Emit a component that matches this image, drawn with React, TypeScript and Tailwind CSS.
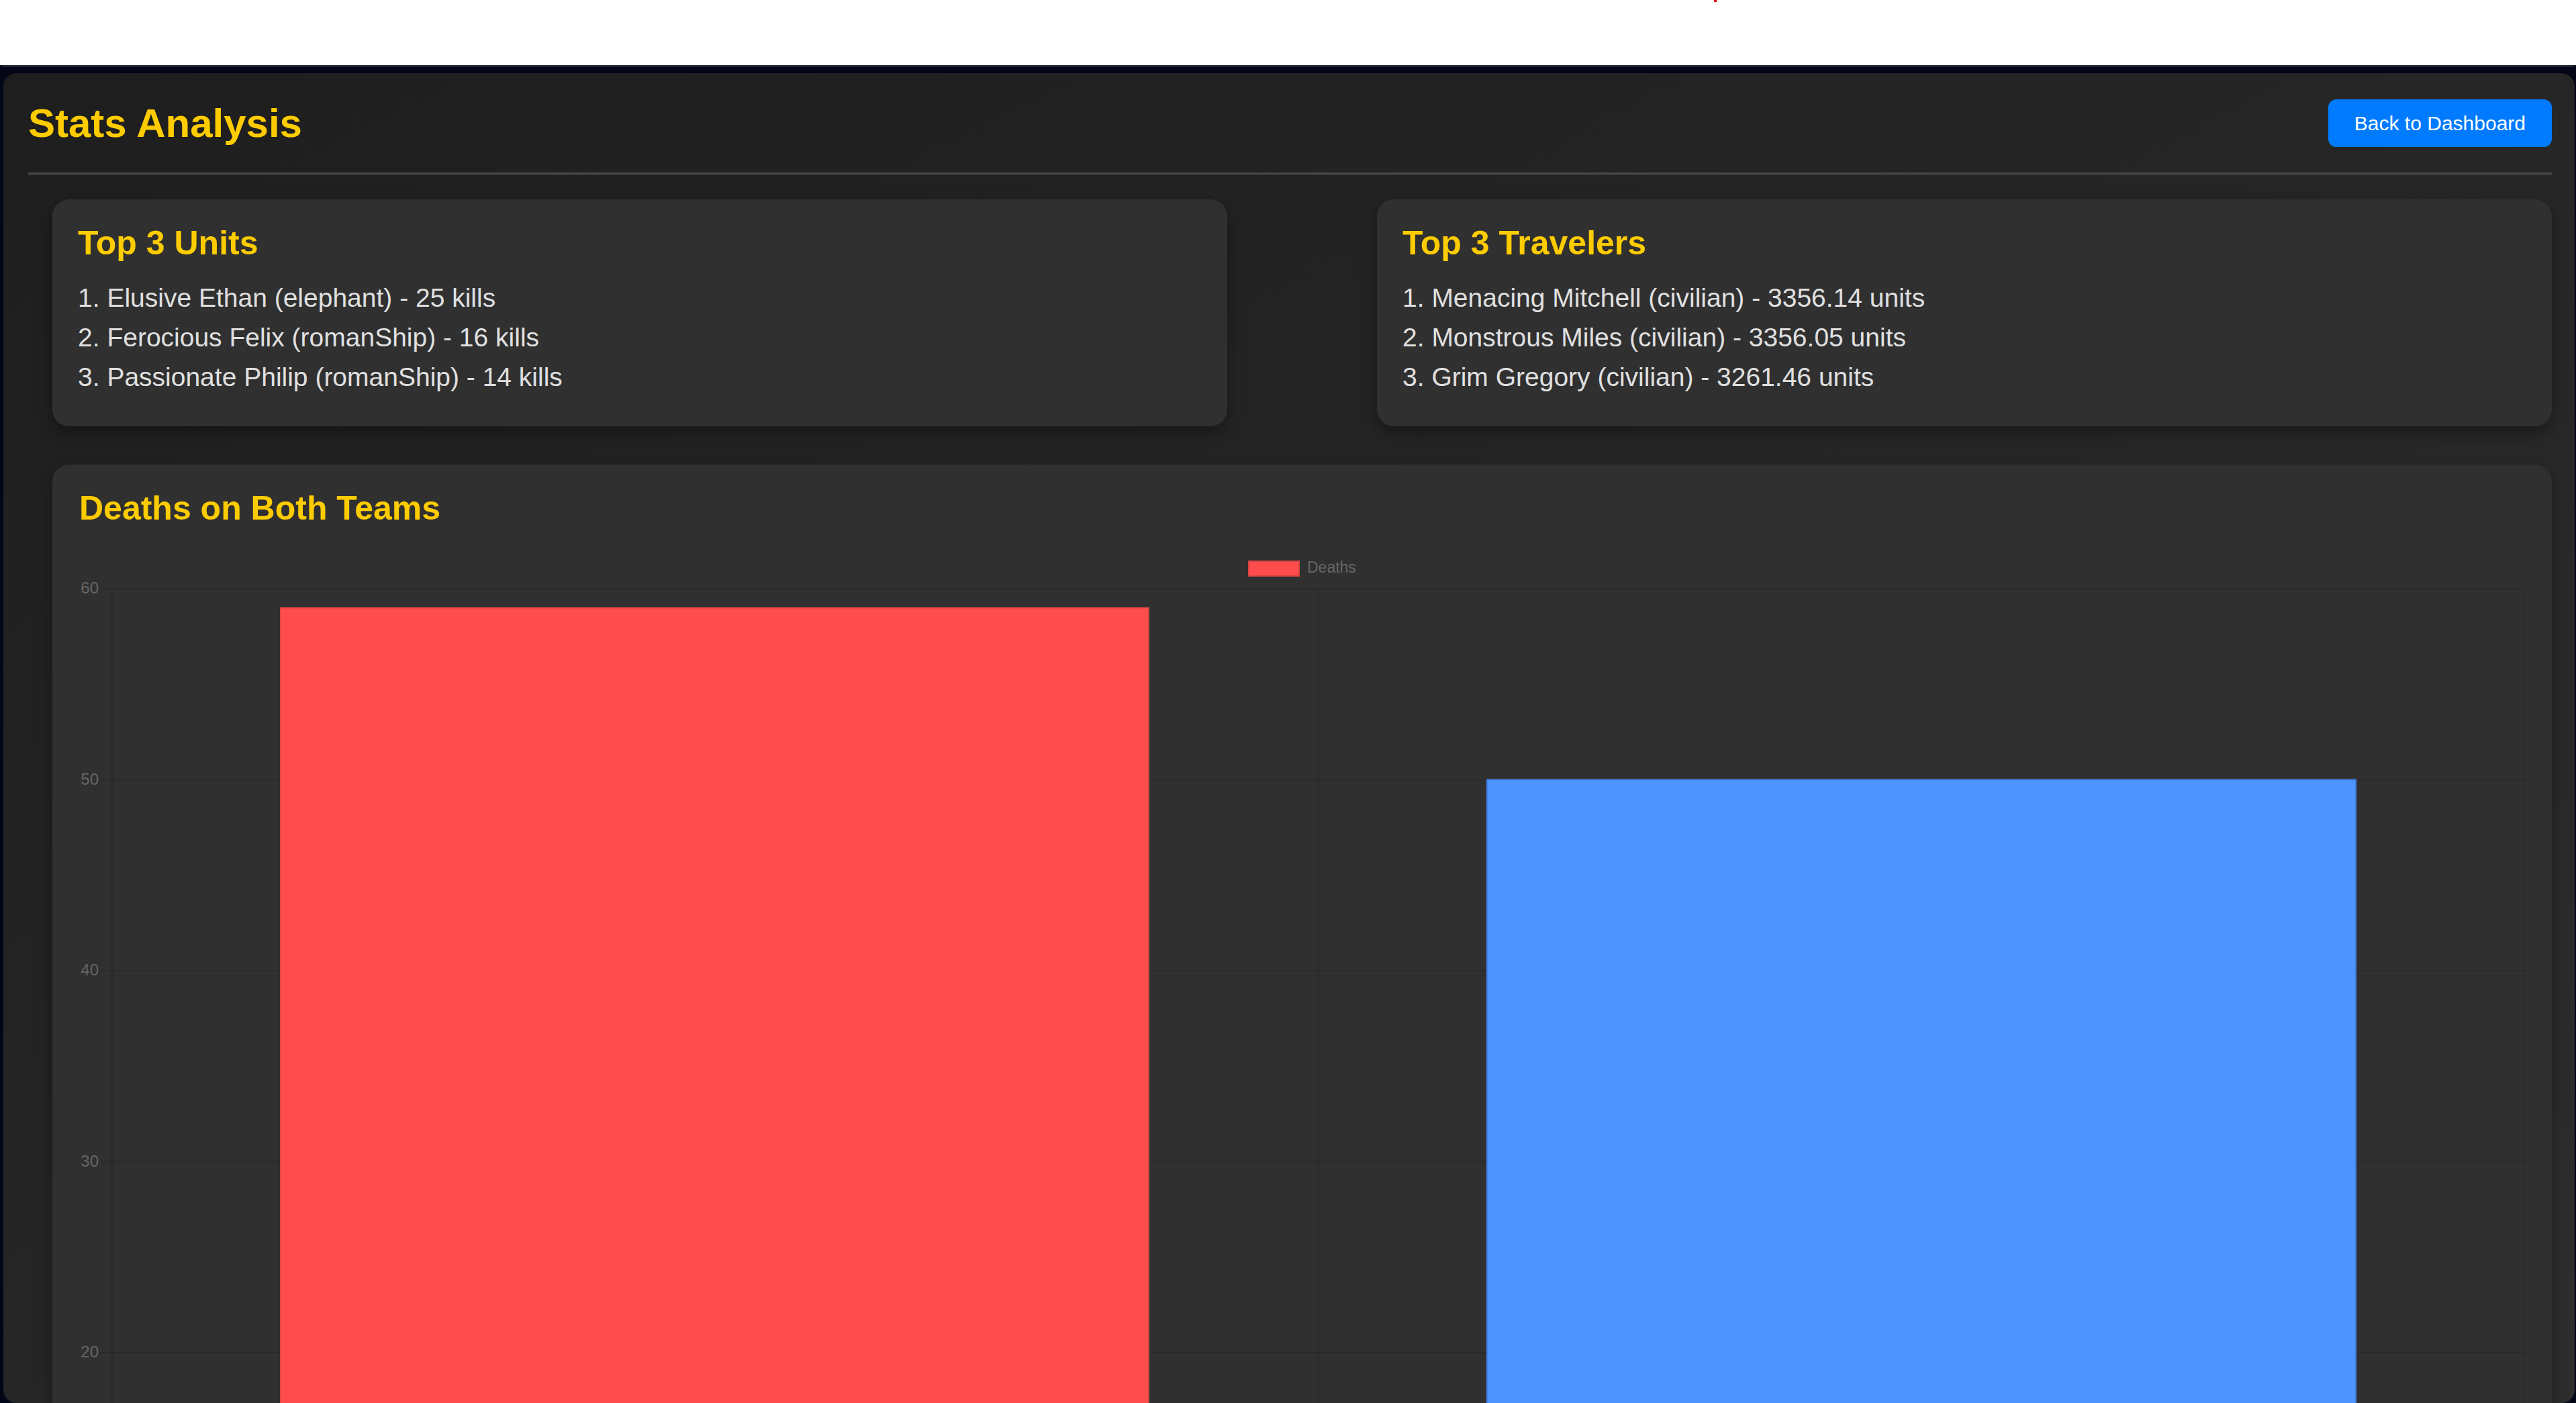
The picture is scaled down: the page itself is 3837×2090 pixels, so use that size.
const topUnits = [
  'Elusive Ethan (elephant) - 25 kills',
  'Ferocious Felix (romanShip) - 16 kills',
  'Passionate Philip (romanShip) - 14 kills',
]

const topTravelers = [
  'Menacing Mitchell (civilian) - 3356.14 units',
  'Monstrous Miles (civilian) - 3356.05 units',
  'Grim Gregory (civilian) - 3261.46 units',
]

// y axis: 60 sits at y=77, every 10 units is 284.5px
const tickY = (v: number) => 77 + (60 - v) * 28.45
const ticks = [60, 50, 40, 30, 20]
const gridOnly = [10, 0]

function ListCard({ title, items }: { title: string; items: string[] }) {
  return (
    <section className="w-[1750px] rounded-[25px] bg-[#303030] pt-[37px] pl-[38px] pb-[44px] shadow-[0_10px_25px_rgba(0,0,0,0.35)]">
      <h3 className="text-[50px] font-bold leading-[57px] text-[#ffcc00]">{title}</h3>
      <ol className="mt-[23px] text-[39px] leading-[59px] text-[#e0e0e0]">
        {items.map((item, i) => (
          <li key={item}>
            {i + 1}. {item}
          </li>
        ))}
      </ol>
    </section>
  )
}

function DeathsChart() {
  return (
    <svg width={3643} height={1800} className="mt-[14px] block" style={{ fontFamily: '"Liberation Sans", Arial, sans-serif' }}>
      <rect x={1742} y={36} width={75} height={22} fill="#ff4d4d" stroke="#d94444" strokeWidth={2} />
      <text x={1829} y={53} fontSize={23} fill="#666666">
        Deaths
      </text>

      {ticks.map((t) => (
        <g key={t}>
          <line x1={32} x2={3643} y1={tickY(t)} y2={tickY(t)} stroke="rgba(0,0,0,0.12)" strokeWidth={2} />
          <text x={29} y={tickY(t) + 7} fontSize={24} fill="#666666" textAnchor="end">
            {t}
          </text>
        </g>
      ))}
      {gridOnly.map((t) => (
        <line key={t} x1={32} x2={3643} y1={tickY(t)} y2={tickY(t)} stroke="rgba(0,0,0,0.12)" strokeWidth={2} />
      ))}
      <line x1={49} x2={49} y1={77} y2={1800} stroke="rgba(0,0,0,0.12)" strokeWidth={2} />
      <line x1={1846} x2={1846} y1={77} y2={1800} stroke="rgba(0,0,0,0.12)" strokeWidth={2} />
      <line x1={3643} x2={3643} y1={77} y2={1800} stroke="rgba(0,0,0,0.12)" strokeWidth={2} />

      <rect x={300} y={tickY(59)} width={1293} height={1800} fill="#ff4d4d" stroke="#e04646" strokeWidth={2} />
      <rect x={2097} y={tickY(50)} width={1294} height={1800} fill="#4d94ff" stroke="#3f80e6" strokeWidth={2} />
    </svg>
  )
}

export default function App() {
  return (
    <div className="h-[2090px] overflow-hidden bg-[#020617] font-['Liberation_Sans',Arial,sans-serif]">
      <div className="relative h-[97px] bg-white">
        <span className="absolute top-0 left-[2553px] h-[3px] w-[4px] bg-red-600" />
      </div>
      <div className="mx-[2px] h-[3px] rounded-b-[14px] bg-[#21252f]" />

      <main className="mt-[9px] mr-[2px] ml-[5px] h-[1981px] overflow-hidden rounded-[20px] bg-gradient-to-br from-[#1e1e1e] to-[#2e2e2e] pt-[39px] pr-[34px] pl-[37px]">
        <header className="flex items-center justify-between border-b-[3px] border-[#4a4a4a] pb-[38px]">
          <h1 className="text-[60px] font-bold leading-[69px] text-[#ffcc00]">Stats Analysis</h1>
          <button
            type="button"
            className="h-[71px] rounded-[12px] bg-[#007bff] px-[39px] text-[30px] text-white"
          >
            Back to Dashboard
          </button>
        </header>

        <div className="mt-[37px] ml-[36px] flex justify-between">
          <ListCard title="Top 3 Units" items={topUnits} />
          <ListCard title="Top 3 Travelers" items={topTravelers} />
        </div>

        <section className="mt-[57px] ml-[36px] rounded-[25px] bg-[#303030] pt-[37px] pr-[40px] pl-[40px] shadow-[0_10px_25px_rgba(0,0,0,0.35)]">
          <h3 className="text-[50px] font-bold leading-[57px] text-[#ffcc00]">Deaths on Both Teams</h3>
          <DeathsChart />
        </section>
      </main>
    </div>
  )
}
